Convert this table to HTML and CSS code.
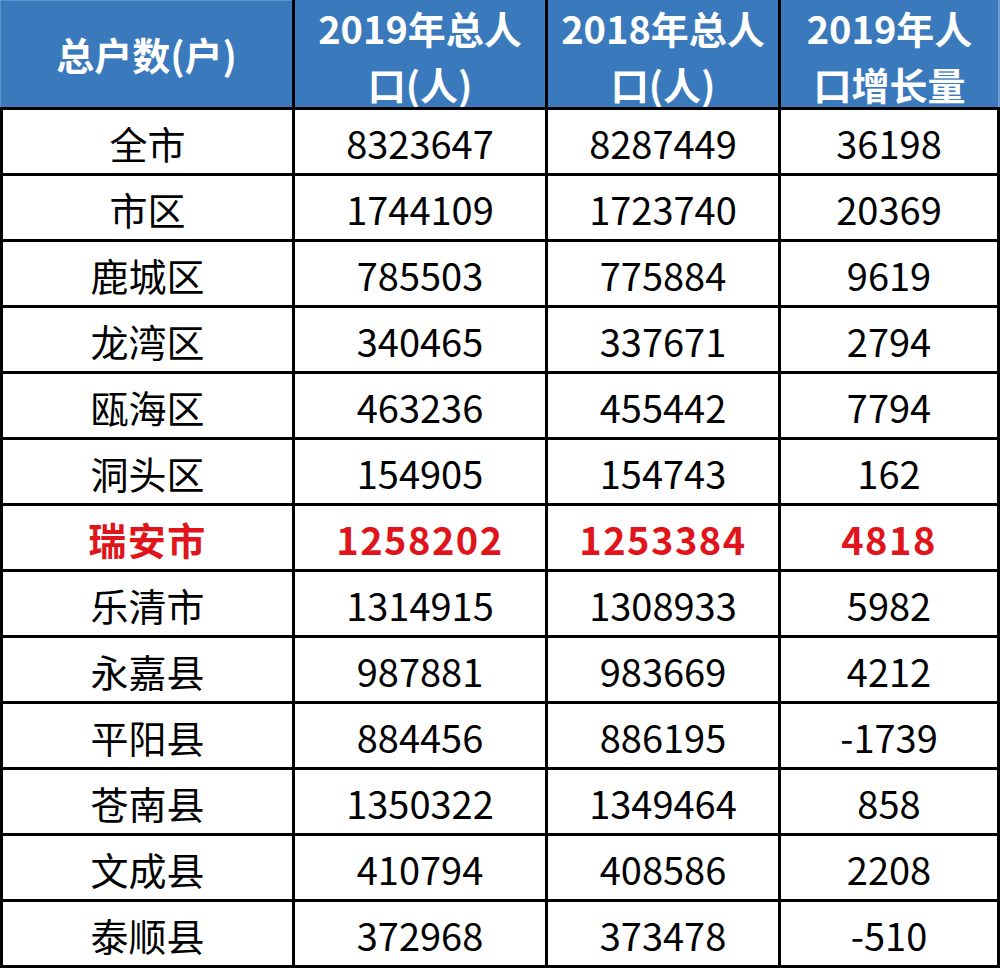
FILE: index.html
```html
<!DOCTYPE html>
<html lang="zh-CN">
<head>
<meta charset="utf-8">
<title>人口统计</title>
<link rel="stylesheet" href="styles.css">
</head>
<body>
<div class="table">
  <div class="h first"><div class="ht one">总户数(户)</div></div>
  <div class="h two"><div class="ht">2019年总人<br>口(人)</div></div>
  <div class="h two"><div class="ht">2018年总人<br>口(人)</div></div>
  <div class="h two last"><div class="ht">2019年人<br>口增长量</div></div>

  <div class="c">全市</div><div class="c">8323647</div><div class="c">8287449</div><div class="c">36198</div>
  <div class="c">市区</div><div class="c">1744109</div><div class="c">1723740</div><div class="c">20369</div>
  <div class="c">鹿城区</div><div class="c">785503</div><div class="c">775884</div><div class="c">9619</div>
  <div class="c">龙湾区</div><div class="c">340465</div><div class="c">337671</div><div class="c">2794</div>
  <div class="c">瓯海区</div><div class="c">463236</div><div class="c">455442</div><div class="c">7794</div>
  <div class="c">洞头区</div><div class="c">154905</div><div class="c">154743</div><div class="c">162</div>
  <div class="c red">瑞安市</div><div class="c red">1258202</div><div class="c red">1253384</div><div class="c red">4818</div>
  <div class="c">乐清市</div><div class="c">1314915</div><div class="c">1308933</div><div class="c">5982</div>
  <div class="c">永嘉县</div><div class="c">987881</div><div class="c">983669</div><div class="c">4212</div>
  <div class="c">平阳县</div><div class="c">884456</div><div class="c">886195</div><div class="c">-1739</div>
  <div class="c">苍南县</div><div class="c">1350322</div><div class="c">1349464</div><div class="c">858</div>
  <div class="c">文成县</div><div class="c">410794</div><div class="c">408586</div><div class="c">2208</div>
  <div class="c">泰顺县</div><div class="c">372968</div><div class="c">373478</div><div class="c">-510</div>
</div>
</body>
</html>
```

FILE: styles.css
```css
html, body {
  margin: 0;
  padding: 0;
  background: #ffffff;
}

body {
  font-family: "Noto Sans CJK SC", "Noto Sans", sans-serif;
  color: #000;
}

.table {
  display: grid;
  grid-template-columns: 289px 250px 230px 216px;
  grid-template-rows: 107px repeat(13, 63px);
  gap: 3px;
  padding: 0 3px 3px 3px;
  background: #000;
  width: 994px;
}

.h {
  background: #3a79bc;
  color: #fff;
  font-weight: 700;
  font-size: 38px;
  display: flex;
  align-items: center;
  justify-content: center;
  overflow: hidden;
  text-align: center;
}

.h.two {
  align-items: flex-start;
}

.h.first {
  margin-left: -3px;
  border-left: 1px solid #5c93cf;
  border-top: 1px solid #5c93cf;
}

.h.last {
  margin-right: -3px;
  border-right: 2px solid #6a9dd3;
}

.ht {
  line-height: 56px;
  white-space: nowrap;
}

.ht.one {
  line-height: 54px;
}

.c {
  background: #fff;
  font-size: 38px;
  display: flex;
  align-items: center;
  justify-content: center;
  line-height: 1;
  padding-top: 2px;
  box-sizing: border-box;
}

.c.red {
  color: #e0141b;
  font-weight: 700;
  letter-spacing: 1.5px;
}
```
